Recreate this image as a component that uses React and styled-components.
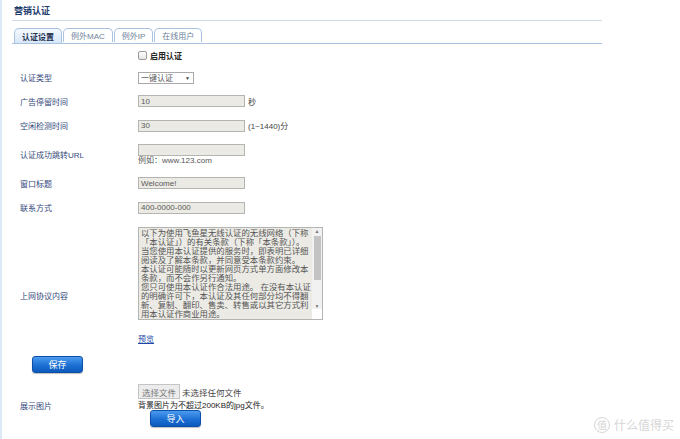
import React from "react";
import styled, { createGlobalStyle } from "styled-components";

const GlobalStyle = createGlobalStyle`
  html, body {
    margin: 0;
    padding: 0;
    background: #ffffff;
  }
  body {
    font-family: "Liberation Sans", "Noto Sans CJK SC", sans-serif;
    font-size: 8px;
    color: #333;
  }
`;

const Page = styled.div`
  position: relative;
  width: 680px;
  height: 439px;
  overflow: hidden;
  border-left: 2px solid #dce9f7;
  box-sizing: border-box;
`;

const SideMark = styled.div`
  position: absolute;
  left: -2px;
  top: ${(p) => p.$top}px;
  width: 2px;
  height: ${(p) => p.$h}px;
  background: ${(p) => p.$color};
`;

const Wrap = styled.div`
  margin-left: 10px;
  width: 590px;
`;

const Title = styled.div`
  height: 21px;
  box-sizing: border-box;
  padding: 4px 0 0 2px;
  border-bottom: 1px solid #cfdcec;
  font-size: 9px;
  font-weight: bold;
  color: #1d3b6d;
`;

const TabBar = styled.div`
  display: flex;
  margin-top: 7px;
  padding-left: 2px;
  height: 15px;
  border-bottom: 1px solid #a9c3e0;
`;

const Tab = styled.div`
  height: 14px;
  box-sizing: border-box;
  margin-right: 1px;
  padding: 0 7px;
  display: flex;
  align-items: center;
  border: 1px solid #a9c3e0;
  border-bottom: none;
  border-radius: 5px 5px 0 0;
  font-size: 8px;
  color: ${(p) => (p.$active ? "#1f2f4f" : "#6d7f99")};
  font-weight: ${(p) => (p.$active ? "bold" : "normal")};
  background: ${(p) =>
    p.$active ? "linear-gradient(#f4f9ff, #d7e7f8)" : "#ffffff"};
  ${(p) => p.$active && "height: 15px; margin-bottom: -1px;"}
`;

const Form = styled.div`
  padding-left: 8px;
`;

const Row = styled.div`
  display: grid;
  grid-template-columns: 118px 1fr;
  align-items: ${(p) => p.$align || "center"};
  height: ${(p) => (p.$h ? `${p.$h}px` : "auto")};
  padding-top: ${(p) => p.$pt || 0}px;
`;

const Label = styled.div`
  color: #33497c;
  font-size: 8px;
  padding-bottom: ${(p) => p.$pb || 0}px;
`;

const Field = styled.div`
  display: flex;
  flex-direction: ${(p) => (p.$column ? "column" : "row")};
  align-items: ${(p) => (p.$column ? "flex-start" : "center")};
`;

const CheckLine = styled.label`
  display: flex;
  align-items: center;
  gap: 3px;
  font-weight: bold;
  color: #222;
  font-size: 8px;
`;

const Check = styled.span`
  width: 7px;
  height: 7px;
  border: 1px solid #9a9a9a;
  border-radius: 2px;
  background: linear-gradient(#fdfdfd, #e6e6e6);
`;

const Select = styled.div`
  width: 56px;
  height: 12px;
  box-sizing: border-box;
  border: 1px solid #aaaaaa;
  background: #fff;
  display: flex;
  align-items: center;
  justify-content: space-between;
  padding: 0 3px 0 2px;
  color: #555;
  font-size: 8px;
`;

const Arrow = styled.span`
  font-size: 5px;
  color: #444;
`;

const Input = styled.div`
  width: 107px;
  height: 12px;
  box-sizing: border-box;
  border: 1px solid #b4b4b0;
  background: #ebeae4;
  color: #5a5a5a;
  font-size: 8px;
  padding-left: 2px;
  display: flex;
  align-items: center;
`;

const Unit = styled.span`
  margin-left: 3px;
  color: #444;
  font-size: 8px;
`;

const Hint = styled.div`
  color: ${(p) => p.$color || "#555"};
  font-size: 8px;
  line-height: 9px;
`;

const AreaBox = styled.div`
  width: 185px;
  height: 93px;
  box-sizing: border-box;
  border: 1px solid #b4b4b0;
  background: #ebeae4;
  display: flex;
`;

const AreaText = styled.div`
  flex: 1;
  padding: 1px 0 0 2px;
  color: #555;
  font-size: 8.4px;
  line-height: 9px;
  overflow: hidden;
`;

const ScrollBar = styled.div`
  width: 10px;
  background: #f1f1f1;
  display: flex;
  flex-direction: column;
  align-items: center;
  font-size: 5px;
  color: #777;
`;

const Thumb = styled.div`
  width: 7px;
  height: 44px;
  background: #c3c3c3;
  margin: 2px 0 auto;
`;

const Corner = styled.div`
  width: 10px;
  height: 10px;
  background: #fff;
`;

const Link = styled.a`
  color: #1c48a8;
  font-size: 8px;
  text-decoration: underline;
`;

const BlueButton = styled.button`
  width: 51px;
  height: 17px;
  margin-left: ${(p) => p.$ml || 0}px;
  border: 1px solid #0d4fa6;
  border-radius: 3px;
  background: linear-gradient(#4c9cf0, #1d6fd3 55%, #0b5bbd);
  color: #fff;
  font-family: inherit;
  font-size: 9px;
  padding: 0;
  box-shadow: 0 1px 1px rgba(0, 0, 0, 0.25);
`;

const SaveRow = styled.div`
  padding: 12px 0 0 20px;
  height: 17px;
`;

const FileLine = styled.div`
  display: flex;
  align-items: center;
  height: 15px;
`;

const FileButton = styled.span`
  display: inline-flex;
  align-items: center;
  justify-content: center;
  width: 42px;
  height: 15px;
  box-sizing: border-box;
  border: 1px solid #c4c4c4;
  background: #ececec;
  color: #777;
  font-size: 8.5px;
`;

const FileName = styled.span`
  margin-left: 2px;
  color: #444;
  font-size: 8.5px;
`;

const Watermark = styled.div`
  position: absolute;
  right: 6px;
  bottom: 6px;
  display: flex;
  align-items: center;
  gap: 4px;
  color: #d6d6d6;
  font-size: 12px;
  font-family: "Noto Sans CJK SC", sans-serif;
`;

const Badge = styled.span`
  width: 14px;
  height: 14px;
  border: 1px solid #d6d6d6;
  border-radius: 50%;
  display: inline-flex;
  align-items: center;
  justify-content: center;
  font-size: 10px;
`;

const agreement =
  "以下为使用飞鱼星无线认证的无线网络（下称「本认证」）的有关条款（下称「本条款」）。当您使用本认证提供的服务时，即表明已详细阅读及了解本条款，并同意受本条款约束。";

export default function App() {
  return (
    <Page>
      <GlobalStyle />
      <SideMark $top={110} $h={18} $color="#1c78c8" />
      <SideMark $top={128} $h={17} $color="#7cb342" />
      <Wrap>
        <Title>营销认证</Title>
        <TabBar>
          <Tab $active>认证设置</Tab>
          <Tab>例外MAC</Tab>
          <Tab>例外IP</Tab>
          <Tab>在线用户</Tab>
        </TabBar>
        <Form>
          <Row $h={22}>
            <span />
            <CheckLine>
              <Check />
              启用认证
            </CheckLine>
          </Row>
          <Row $h={23}>
            <Label>认证类型</Label>
            <Field>
              <Select>
                一键认证
                <Arrow>▼</Arrow>
              </Select>
            </Field>
          </Row>
          <Row $h={24}>
            <Label>广告停留时间</Label>
            <Field>
              <Input>10</Input>
              <Unit>秒</Unit>
            </Field>
          </Row>
          <Row $h={25}>
            <Label>空闲检测时间</Label>
            <Field>
              <Input>30</Input>
              <Unit>(1~1440)分</Unit>
            </Field>
          </Row>
          <Row $h={33}>
            <Label>认证成功跳转URL</Label>
            <Field $column>
              <Input />
              <Hint>例如：www.123.com</Hint>
            </Field>
          </Row>
          <Row $h={24}>
            <Label>窗口标题</Label>
            <Field>
              <Input>Welcome!</Input>
            </Field>
          </Row>
          <Row $h={25}>
            <Label>联系方式</Label>
            <Field>
              <Input>400-0000-000</Input>
            </Field>
          </Row>
          <Row $h={100} $align="end">
            <Label $pb={19}>上网协议内容</Label>
            <AreaBox>
              <AreaText>
                {agreement}
                <br />
                本认证可能随时以更新网页方式单方面修改本条款，而不会作另行通知。
                <br />
                您只可使用本认证作合法用途。 在没有本认证的明确许可下，本认证及其任何部分均不得翻新、复制、翻印、售卖、转售或以其它方式利用本认证作商业用途。
              </AreaText>
              <ScrollBar>
                ▲
                <Thumb />
                ▼
                <Corner />
              </ScrollBar>
            </AreaBox>
          </Row>
          <Row $h={24} $align="end">
            <span />
            <Link>预览</Link>
          </Row>
        </Form>
        <SaveRow>
          <BlueButton>保存</BlueButton>
        </SaveRow>
        <Form>
          <Row $pt={11}>
            <Label>展示图片</Label>
            <Field $column>
              <FileLine>
                <FileButton>选择文件</FileButton>
                <FileName>未选择任何文件</FileName>
              </FileLine>
              <Hint $color="#222" style={{ marginTop: 2 }}>
                背景图片为不超过200KB的jpg文件。
              </Hint>
              <BlueButton $ml={12}>导入</BlueButton>
            </Field>
          </Row>
        </Form>
      </Wrap>
      <Watermark>
        <Badge>值</Badge>
        什么值得买
      </Watermark>
    </Page>
  );
}
